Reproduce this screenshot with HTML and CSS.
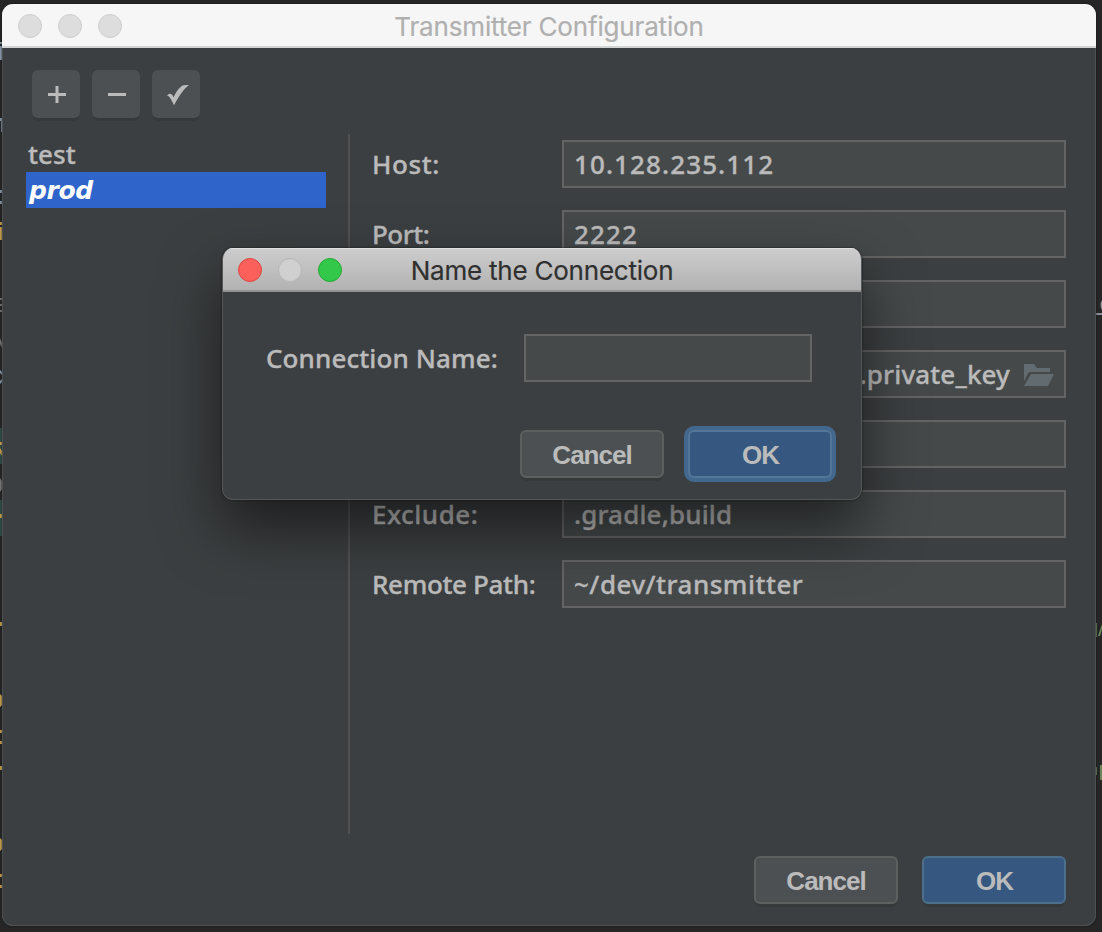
FILE: index.html
```html
<!DOCTYPE html>
<html lang="en">
<head>
<meta charset="utf-8">
<title>Transmitter Configuration</title>
<link rel="stylesheet" href="styles.css">
</head>
<body>
<svg class="editor" width="1102" height="932" viewBox="0 0 1102 932" aria-hidden="true">
  <g fill="#8b9aa9"><path d="M0 42h2v2H0zM0 46h2v14H0zM0 118h2v3H0zM1 121h1v11H1zM0 190h2v3H0zM0 201h2v3H0zM0 370l2 2v3l-2-2zM0 384l2-2v-3l-2 2z"/></g>
  <g fill="#777"><path d="M0 298h2v2H0zM0 304h2v2H0zM0 310h2v2H0zM0 338l2 5v5l-2-4zM0 478l2 3v8l-2 3z"/></g>
  <g fill="#31504a"><path d="M0 428h2v36H0zM0 500h2v36H0z"/></g>
  <g fill="#c9a14c"><path d="M0 222h2v3H0zM0 227h2v13H0zM0 442h2v3H0zM0 448l2 3v5l-2-3zM0 514h2v4H0zM0 622h2v4H0zM0 694l2 2v9l-2 2zM0 730h2v3H0zM0 741h2v3H0zM0 766h2v4H0zM0 838l2 2v9l-2 2zM0 874h2v3H0zM0 885h2v3H0z"/></g>
  <path fill="#8b9098" d="M1102 300q-3 5 0 10zM1096 313h6v2h-6z"/>
  <path fill="#6a8759" d="M1096 623h1v14h-1zM1098 636l4-12v5l-2 7zM1096 767h1v8h-1zM1100 765h2v15h-2z"/>
</svg>
<main class="window">
  <header class="titlebar">
    <div class="lights"><i class="light"></i><i class="light"></i><i class="light"></i></div>
    <h1 class="title">Transmitter Configuration</h1>
  </header>
  <div class="toolbar">
    <button class="tool" aria-label="Add"><svg width="48" height="48" viewBox="0 0 48 48"><path d="M16 24.500h18M25 16v17" fill="none" stroke="#bbb" stroke-width="3"/></svg></button>
    <button class="tool" aria-label="Remove"><svg width="48" height="48" viewBox="0 0 48 48"><path d="M16 24.500h18" fill="none" stroke="#bbb" stroke-width="3"/></svg></button>
    <button class="tool" aria-label="Select"><svg width="48" height="48" viewBox="0 0 48 48"><path d="M15 25.500Q17 23 19 24Q20.500 24.500 21.500 27.200Q26 18 30.500 15.500Q32 14.700 37 15Q33.500 17.500 31 21Q27 26 22 35.200Q19.800 30.500 18 27.700Q16.800 26 15 25.500Z" fill="#bbb"/></svg></button>
  </div>
  <div class="content">
    <ul class="connections">
      <li class="connection">test</li>
      <li class="connection selected">prod</li>
    </ul>
    <form class="form">
      <div class="row"><label class="label host">Host:</label><div class="field digits">10.128.235.112</div></div>
      <div class="row"><label class="label port">Port:</label><div class="field digits">2222</div></div>
      <div class="row"><label class="label"></label><div class="field"></div></div>
      <div class="row"><label class="label"></label><div class="field path"><span class="key">.private_key</span>
        <svg class="folder" width="30" height="22" viewBox="0 0 30 22"><path d="M0 0h10l3 4h13v4H6.500Q5 8 4.200 9.300L0 17zM7 10h23l-6 12H0z" fill="#626b70"/></svg></div></div>
      <div class="row"><label class="label"></label><div class="field"></div></div>
      <div class="row"><label class="label exclude">Exclude:</label><div class="field gradle">.gradle,build</div></div>
      <div class="row"><label class="label remote">Remote Path:</label><div class="field remote-value">~/dev/transmitter</div></div>
    </form>
  </div>
  <footer class="footer"><button class="button">Cancel</button><button class="button primary">OK</button></footer>
</main>
<section class="dialog">
  <header class="titlebar active">
    <div class="lights"><i class="light red"></i><i class="light idle"></i><i class="light green"></i></div>
    <h2 class="title">Name the Connection</h2>
  </header>
  <div class="prompt"><label class="name-label">Connection Name:</label><div class="name-field"></div></div>
  <div class="dialog-actions"><button class="button">Cancel</button><button class="button primary focused">OK</button></div>
</section>
</body>
</html>
```
FILE: styles.css
```css
* { box-sizing: border-box; }
body {
  margin: 0;
  width: 1102px;
  height: 932px;
  padding: 4px 6px 6px 2px;
  overflow: hidden;
  position: relative;
  background: #262626;
  color: #bbb;
  font: 500 26px/36px "Noto Sans", "Open Sans", sans-serif;
}
.editor { position: absolute; left: 0; top: 0; }
.window {
  position: relative;
  height: 922px;
  display: flex;
  flex-direction: column;
  overflow: hidden;
  border-radius: 11px;
  background: #3c3f41;
  box-shadow: inset 0 0 0 1px #4e5153, 0 0 2px #111;
}
.titlebar {
  position: relative;
  height: 44px;
  flex: none;
  display: flex;
  align-items: center;
  justify-content: center;
  background: #f6f6f6;
  border-bottom: 2px solid #d2d5d4;
}
.titlebar.active {
  margin: 0 -1px;
  background: linear-gradient(#cdcdcd, #b2b2b2);
  border-bottom-color: #929494;
  box-shadow: inset 0 1px #e0e0e0;
}
.lights { position: absolute; left: 16px; top: 10px; display: flex; gap: 16px; }
.light { width: 24px; height: 24px; border-radius: 50%; background: #ddd; border: 1px solid #cecece; }
.red { background: #fc605b; border-color: #df4744; }
.idle { background: #d0d0d0; border-color: #b6b6b6; }
.green { background: #34c84a; border-color: #24aa35; }
.title {
  margin: 4px 0 0;
  font: 400 26px/36px Inter, "Liberation Sans", sans-serif;
  letter-spacing: -.17px;
  color: #b0b0b0;
  -webkit-text-stroke: .2px;
  white-space: nowrap;
}
.active .title { color: #303030; letter-spacing: -.22px; }
.toolbar { display: flex; gap: 12px; padding: 22px 30px 0; flex: none; }
.tool {
  width: 48px;
  height: 48px;
  padding: 0;
  border: 0;
  border-radius: 6px;
  background: #4c5052;
  box-shadow: 0 4px 0 -1px #36393a;
}
.tool svg { display: block; }
.content { display: flex; height: 700px; margin: 16px 30px 0 24px; flex: none; }
.connections { width: 300px; margin: 2px 22px 0 0; padding: 0; list-style: none; }
.connection { height: 36px; padding-left: 2px; letter-spacing: .1px; -webkit-text-stroke: .35px; }
.selected {
  padding-left: 3px;
  background: #2f65ca;
  color: #fff;
  font: italic 700 25px/38px "DejaVu Sans", "Noto Sans", sans-serif;
  letter-spacing: -.4px;
  -webkit-text-stroke: 0;
}
.form { flex: 1; padding: 6px 0 0 22px; border-left: 2px solid #515151; display: flex; flex-direction: column; gap: 22px; }
.row { display: flex; height: 48px; }
.label { width: 190px; padding-top: 6px; white-space: nowrap; -webkit-text-stroke: .35px; }
.field {
  flex: 1;
  border: 2px solid #646464;
  background: #45494a;
  padding: 4px 10px;
  white-space: nowrap;
  -webkit-text-stroke: .35px;
}
.host { letter-spacing: .6px; }
.port { letter-spacing: -.5px; }
.exclude { letter-spacing: .5px; }
.remote { letter-spacing: -.35px; }
.digits { letter-spacing: 1.1px; }
.gradle { letter-spacing: .15px; }
.remote-value { letter-spacing: .5px; }
.path { display: flex; justify-content: flex-end; gap: 14px; }
.key { letter-spacing: .15px; }
.folder { margin-top: 8px; }
.footer { display: flex; justify-content: flex-end; gap: 24px; padding: 22px 30px 0; }
.button {
  width: 144px;
  height: 48px;
  padding: 2px 0 0;
  border: 2px solid #5e6060;
  border-radius: 6px;
  background: #4c5052;
  color: #bbb;
  font: 700 26px/36px "Liberation Sans", Arial, sans-serif;
  letter-spacing: -1px;
  box-shadow: 0 4px 0 -1px #36393a;
}
.primary { background: #365880; border-color: #4c708c; padding-left: 1px; }
.focused { border-color: #537699; box-shadow: 0 0 0 4px #43688f; }
.dialog {
  position: absolute;
  left: 222px;
  top: 248px;
  width: 640px;
  height: 252px;
  overflow: hidden;
  border-radius: 11px;
  background: #3c3f41;
  border: solid #555859;
  border-width: 0 1px 1px;
  box-shadow: 0 0 2px #111, 0 28px 60px rgba(0, 0, 0, .55);
}
.prompt { display: flex; gap: 20px; padding: 42px 49px 0 43px; }
.name-label { width: 238px; padding-top: 6px; white-space: nowrap; letter-spacing: .1px; -webkit-text-stroke: .35px; }
.name-field { width: 288px; height: 48px; background: #45494a; border: 2px solid #646464; }
.dialog-actions { display: flex; justify-content: flex-end; gap: 24px; padding: 48px 29px 0; }
```
